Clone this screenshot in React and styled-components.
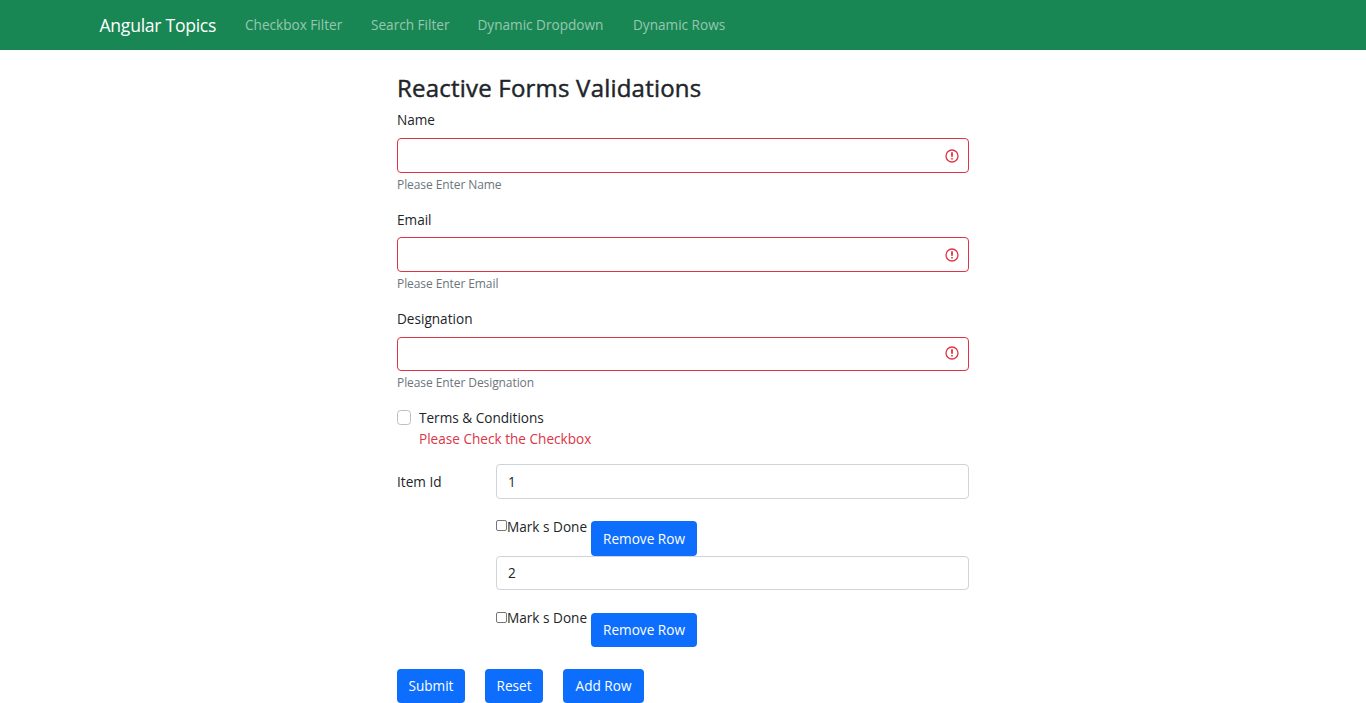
import React from 'react';
import styled, { createGlobalStyle } from 'styled-components';

const Global = createGlobalStyle`
  *, *::before, *::after { box-sizing: border-box; }
  html, body { height: 703px; overflow: hidden; }
  body {
    margin: 0;
    background: #fff;
    color: #212529;
    font-family: "Open Sans", "Noto Sans", sans-serif;
    font-size: 13.6px;
    line-height: 22px;
  }
  button, input { font: inherit; color: inherit; }
`;

const Navbar = styled.nav`
  display: flex;
  align-items: center;
  height: 50px;
  padding-left: 99.5px;
  background: #198754;
  white-space: nowrap;
`;

const Brand = styled.a`
  width: 145.5px;
  color: #fff;
  font-size: 17.6px;
  letter-spacing: -0.28px;
`;

const NavLink = styled.a`
  width: ${(p) => p.$width}px;
  color: rgba(255, 255, 255, 0.55);
`;

const Form = styled.form`
  width: 572px;
  margin: 0 auto;
  padding-top: 23px;
`;

const Title = styled.h1`
  margin: 0 0 6px;
  font-size: 24px;
  font-weight: 500;
  line-height: 30px;
  letter-spacing: 0.21px;
  -webkit-text-stroke: 0.45px currentColor;
  white-space: nowrap;
`;

const Field = styled.div`
  height: ${(p) => p.$height}px;
`;

const Label = styled.label`
  display: block;
  height: 22px;
  margin-bottom: ${(p) => p.$gap || 0}px;
  white-space: nowrap;
`;

const InvalidBox = styled.div`
  display: flex;
  align-items: center;
  height: ${(p) => p.$height}px;
  padding: 0 9px ${(p) => p.$lift || 0}px 0;
  border: 1px solid #dc3545;
  border-radius: 4px;

  svg { flex: none; }
`;

const BareInput = styled.input`
  flex: 1;
  min-width: 0;
  padding: 0 10px;
  border: 0;
  outline: 0;
  background: none;
`;

const Help = styled.small`
  display: block;
  margin-top: 3px;
  height: 18px;
  color: #6c757d;
  font-size: 12px;
  line-height: 18px;
  letter-spacing: -0.08px;
`;

const Terms = styled.div`
  display: flex;
  gap: 8px;
  height: 57px;
`;

const Check = styled.input`
  appearance: none;
  flex: none;
  width: ${(p) => p.$size}px;
  height: ${(p) => p.$tall || p.$size}px;
  margin: ${(p) => p.$top}px 0 0;
  border: 1px solid ${(p) => p.$border};
  border-radius: ${(p) => p.$radius}px;
  background: #fff;
`;

const TermsText = styled.div`
  line-height: 21px;
  white-space: nowrap;
`;

const Line = styled.div`
  color: ${(p) => (p.$danger ? '#dc3545' : 'inherit')};
`;

const Items = styled.div`
  display: grid;
  grid-template-columns: 99px 1fr;
`;

const ItemLabel = styled(Label)`
  margin-top: 7px;
`;

const ItemInput = styled.input`
  display: block;
  width: 100%;
  height: ${(p) => p.$height}px;
  padding: 0 11px ${(p) => p.$lift || 0}px;
  border: 1px solid #ced4da;
  border-radius: 4px;
  outline: 0;
`;

const ItemActions = styled.div`
  display: flex;
  align-items: flex-start;
  padding-top: 17px;
`;

const Done = styled.label`
  display: flex;
  width: 95px;
  white-space: nowrap;
`;

const Button = styled.button`
  width: ${(p) => p.$width}px;
  height: ${(p) => p.$height || 34}px;
  margin-top: ${(p) => p.$top || 0}px;
  padding: 0;
  border: 0;
  border-radius: 4px;
  background: #0d6efd;
  color: #fff;
  white-space: nowrap;
`;

const Footer = styled.div`
  display: flex;
  gap: 20px;
  margin-top: 22px;
`;

const Alert = () => (
  <svg width="14" height="14" viewBox="0 0 14 14" fill="none" stroke="#dc3545">
    <circle cx="7" cy="7" r="6" strokeWidth="1.3" />
    <path d="M7 3.3v4.4" strokeWidth="1.8" />
    <path d="M7 8.9v1.6" strokeWidth="1.6" />
  </svg>
);

const fields = [
  { label: 'Name', help: 'Please Enter Name', height: 100, box: 35, gap: 7 },
  { label: 'Email', help: 'Please Enter Email', height: 99, box: 35, gap: 6 },
  { label: 'Designation', help: 'Please Enter Designation', height: 99, box: 34, gap: 7, lift: 2 },
];

const items = [
  { value: '1', input: 35, checkTop: 4, buttonTop: 5, button: 35 },
  { value: '2', input: 34, lift: 2, checkTop: 5, buttonTop: 6, button: 34 },
];

export default function App() {
  return (
    <>
      <Global />
      <Navbar>
        <Brand>Angular Topics</Brand>
        <NavLink $width={126}>Checkbox Filter</NavLink>
        <NavLink $width={106.5}>Search Filter</NavLink>
        <NavLink $width={155.5}>Dynamic Dropdown</NavLink>
        <NavLink $width={100}>Dynamic Rows</NavLink>
      </Navbar>
      <Form>
        <Title>Reactive Forms Validations</Title>
        {fields.map((f) => (
          <Field key={f.label} $height={f.height}>
            <Label $gap={f.gap}>{f.label}</Label>
            <InvalidBox $height={f.box} $lift={f.lift}>
              <BareInput />
              <Alert />
            </InvalidBox>
            <Help>{f.help}</Help>
          </Field>
        ))}
        <Terms>
          <Check type="checkbox" $size={14} $tall={15} $top={3} $radius={3.5} $border="#bfbfbf" />
          <TermsText>
            <Line>Terms &amp; Conditions</Line>
            <Line $danger>Please Check the Checkbox</Line>
          </TermsText>
        </Terms>
        <Items>
          <ItemLabel>Item Id</ItemLabel>
          <div>
            {items.map((it) => (
              <div key={it.value}>
                <ItemInput defaultValue={it.value} $height={it.input} $lift={it.lift} />
                <ItemActions>
                  <Done>
                    <Check type="checkbox" $size={11} $top={it.checkTop} $radius={2} $border="#767676" />
                    Mark s Done
                  </Done>
                  <Button type="button" $width={106} $height={it.button} $top={it.buttonTop}>Remove Row</Button>
                </ItemActions>
              </div>
            ))}
          </div>
        </Items>
        <Footer>
          <Button type="button" $width={68}>Submit</Button>
          <Button type="button" $width={58}>Reset</Button>
          <Button type="button" $width={81}>Add Row</Button>
        </Footer>
      </Form>
    </>
  );
}
